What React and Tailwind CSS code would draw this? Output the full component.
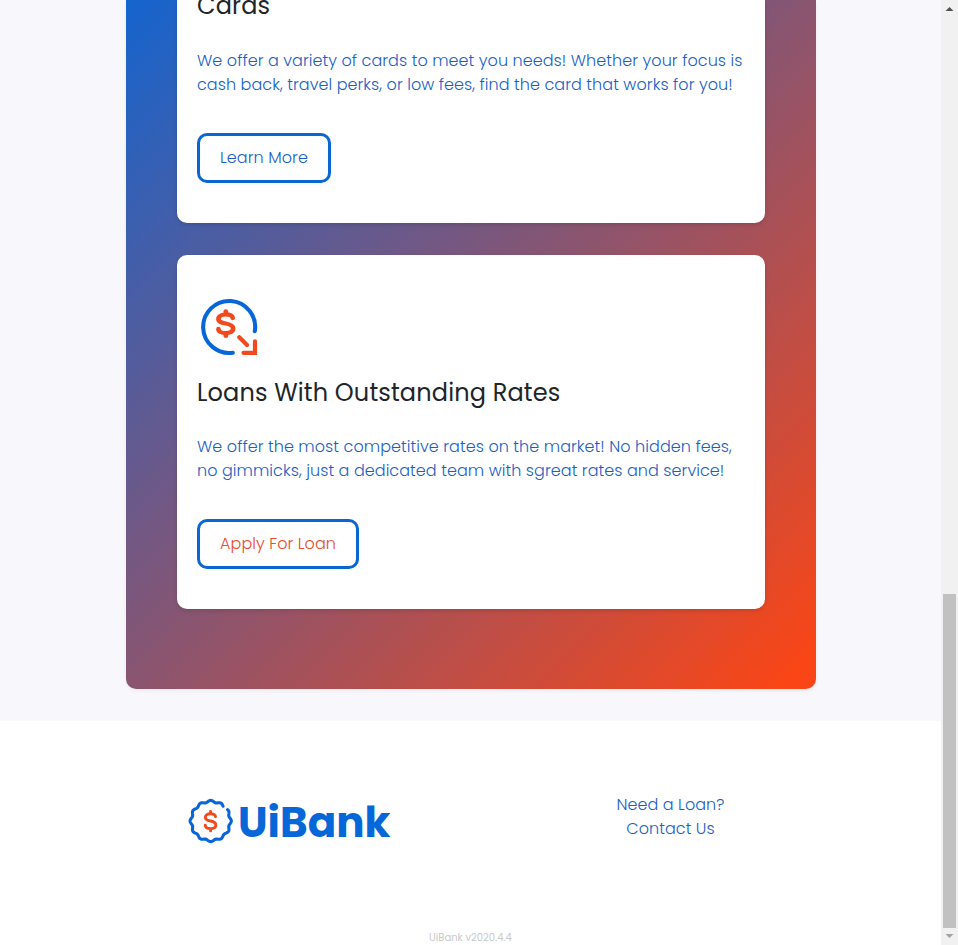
import React from "react";

function Dollar() {
  return (
    <g fill="none" stroke="#f04a1e" strokeLinecap="round" strokeLinejoin="round">
      <path d="M33.5 20.5C33.5 17.8 30.5 16 26 16S18 18.2 18 21.5C18 25.2 21.5 26 26 27S34 29.2 34 33S30.5 38.5 26 38.5S18 36.7 18 33.5M26 12.5V16M26 38.5V42" />
    </g>
  );
}

function LoanIcon() {
  return (
    <svg className="block h-16 w-16" viewBox="0 0 64 64">
      <path d="M57.8 36.2A26 26 0 1 0 35.8 57.7" fill="none" stroke="#0867d8" strokeWidth="4.1" strokeLinecap="round" />
      <g transform="translate(4.9 6.1) scale(.92 .83)" strokeWidth="5.1"><Dollar /></g>
      <path d="M42.3 42.3L50 50M58 46.3V57.8H46.5" fill="none" stroke="#ef4b21" strokeWidth="4.2" strokeLinecap="round" strokeLinejoin="miter" />
    </svg>
  );
}

// Twelve-lobed ring, open at the upper right
const sealPoints = Array.from({ length: 173 }, (_, i) => {
  const a = ((-34 + i * 2) * Math.PI) / 180;
  const r = 19.7 + 0.9 * Math.cos(12 * a);
  return (22.7 + r * Math.cos(a)).toFixed(2) + "," + (23 + r * Math.sin(a)).toFixed(2);
}).join(" ");

function Seal() {
  return (
    <svg className="block h-[46px] w-[46px] shrink-0" viewBox="0 0 46 46">
      <polyline points={sealPoints} fill="none" stroke="#0867d8" strokeWidth="3.1" strokeLinecap="round" strokeLinejoin="round" />
      <g transform="translate(5.4 5.2) scale(.66)" strokeWidth="4.4"><Dollar /></g>
    </svg>
  );
}

const link = "font-light tracking-[0.06px] text-[#1b5fc4]";
const button = "flex h-[50px] items-center justify-center rounded-[10px] border-[3px] border-[#0a66d2] font-light tracking-[0.06px] whitespace-nowrap";

export default function App() {
  return (
    <div className="flex h-[945px] w-[958px] overflow-hidden bg-white font-['Poppins','Inter',sans-serif] text-base leading-6">
      <div className="flex w-[941px] flex-col">
        <main className="h-[721px] shrink-0 bg-[#f7f7fc] pl-[126px]">
          <section className="h-[689px] w-[690px] rounded-b-[10px] bg-[linear-gradient(135deg,#0067df_-8.6%,#fa4616_97.5%)] px-[51px] shadow-[0_2px_4px_rgba(0,0,0,0.05)]">
            <article className="flow-root h-[223px] rounded-b-[10px] bg-white px-5 shadow-[0_2px_4px_rgba(0,0,0,0.12)]">
              <h2 className="-mt-3 h-[61px] w-fit text-2xl leading-[36px] tracking-[0.16px] text-[#212529]">
                Cards
              </h2>
              <p className={link}>
                <span className="block whitespace-nowrap">We offer a variety of cards to meet you needs! Whether your focus is</span>
                <span className="block whitespace-nowrap">cash back, travel perks, or low fees, find the card that works for you!</span>
              </p>
              <button className={button + " mt-[36px] w-[134px] text-[#1b5fc4]"}>Learn More</button>
            </article>

            <article className="mt-8 h-[354px] rounded-[10px] bg-white px-5 pt-10 shadow-[0_2px_4px_rgba(0,0,0,0.12)]">
              <LoanIcon />
              <h2 className="mt-4 h-[60px] whitespace-nowrap text-2xl leading-[36px] tracking-[0.16px] text-[#212529]">
                Loans With Outstanding Rates
              </h2>
              <p className={link}>
                <span className="block whitespace-nowrap">We offer the most competitive rates on the market! No hidden fees,</span>
                <span className="block whitespace-nowrap">no gimmicks, just a dedicated team with sgreat rates and service!</span>
              </p>
              <button className={button + " mt-[36px] w-[162px] text-[#e94c2b]"}>Apply For Loan</button>
            </article>
          </section>
        </main>

        <footer className="flex h-[224px] shrink-0 flex-col">
          <div className="flex h-[208px] shrink-0 pl-[188px] pt-[71px]">
            <div className="flex h-[58px] w-[406px] items-center">
              <Seal />
              <span className="ml-1 mt-[3px] whitespace-nowrap text-[42px] leading-[58px] font-bold text-[#0867d8]">UiBank</span>
            </div>
            <nav className={link + " flex w-[153px] flex-col items-center whitespace-nowrap pt-px"}>
              <a>Need a Loan?</a>
              <a>Contact Us</a>
            </nav>
          </div>
          <p className="pt-px text-center text-[10px] leading-4 text-[#c9c9c9]">UiBank v2020.4.4</p>
        </footer>
      </div>

      <aside className="flex w-[17px] flex-col items-center bg-[#f1f1f1]">
        <svg className="h-[17px] w-[17px]" viewBox="0 0 17 17"><path d="M4.5 11L8.5 7L12.5 11Z" fill="#505050" /></svg>
        <div className="mt-[577px] h-[334px] w-[13px] bg-[#c1c1c1]" />
        <svg className="h-[17px] w-[17px]" viewBox="0 0 17 17"><path d="M4.5 6L8.5 10L12.5 6Z" fill="#a3a3a3" /></svg>
      </aside>
    </div>
  );
}
